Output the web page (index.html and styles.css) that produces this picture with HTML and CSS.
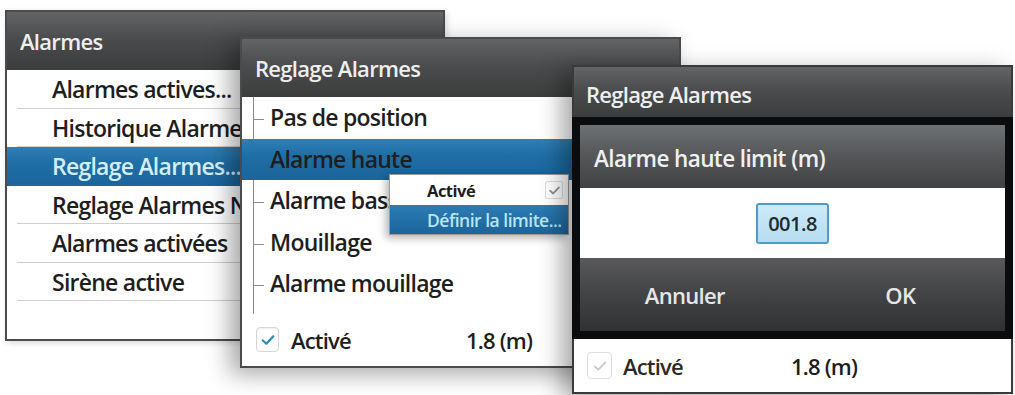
FILE: index.html
```html
<!DOCTYPE html>
<html lang="fr">
<head>
<meta charset="utf-8">
<title>Alarmes</title>
<link rel="stylesheet" href="styles.css">
</head>
<body>
<div class="desk">
  <section class="win w1">
    <header class="hdr">Alarmes</header>
    <ul class="list1">
      <li class="r1">Alarmes actives...</li>
      <li class="r1">Historique Alarmes</li>
      <li class="r1 sel">Reglage Alarmes...</li>
      <li class="r1">Reglage Alarmes N</li>
      <li class="r1">Alarmes activées</li>
      <li class="r1">Sirène active</li>
    </ul>
  </section>

  <section class="win w2">
    <header class="hdr">Reglage Alarmes</header>
    <ul class="tree">
      <li class="r2">Pas de position</li>
      <li class="r2 sel">Alarme haute</li>
      <li class="r2">Alarme basse</li>
      <li class="r2">Mouillage</li>
      <li class="r2">Alarme mouillage</li>
      <li class="tail"></li>
    </ul>
    <div class="foot">
      <span class="cb"><svg viewBox="0 0 24 24" width="16" height="16"><polyline points="4,12.5 9.5,17.5 20,6.5" fill="none" stroke="#2a87bf" stroke-width="3.2" stroke-linecap="round" stroke-linejoin="round"/></svg></span>
      <span class="flabel">Activé</span>
      <span class="fval">1.8 (m)</span>
    </div>
    <div class="ctx">
      <div class="ctx-row"><span class="ctx-bold">Activé</span><span class="ctx-cb"><svg viewBox="0 0 24 24" width="13" height="13"><polyline points="4,12.5 9.5,17.5 20,6.5" fill="none" stroke="#8a9097" stroke-width="3.4" stroke-linecap="round" stroke-linejoin="round"/></svg></span></div>
      <div class="ctx-row ctx-sel">Définir la limite...</div>
    </div>
  </section>

  <section class="win w3">
    <header class="hdr hdr3">Reglage Alarmes</header>
    <div class="dlg">
      <div class="dlg-hdr">Alarme haute limit (m)</div>
      <div class="dlg-body"><span class="inp">001.8</span></div>
      <div class="dlg-btns"><span class="btn">Annuler</span><span class="btn">OK</span></div>
    </div>
    <div class="foot foot3">
      <span class="cb cb3"><svg viewBox="0 0 24 24" width="16" height="16"><polyline points="4,12.5 9.5,17.5 20,6.5" fill="none" stroke="#c9c9c9" stroke-width="2.6" stroke-linecap="round" stroke-linejoin="round"/></svg></span>
      <span class="flabel f3">Activé</span>
      <span class="fval f3v">1.8 (m)</span>
    </div>
  </section>
</div>
</body>
</html>
```
FILE: styles.css
```css
* { box-sizing: border-box; }
html, body { margin: 0; padding: 0; background: #ffffff; }
body { font-family: "Open Sans", "Noto Sans", "DejaVu Sans", sans-serif; font-weight: 600; }

.desk { position: relative; width: 1015px; height: 395px; overflow: hidden; background: #fff; }

.win {
  position: absolute;
  background: #fff;
  border: 2px solid #4b4b4b;
  display: flex;
  flex-direction: column;
}
.w1 { left: 5px; top: 10px; width: 440px; height: 331px; z-index: 1; box-shadow: 2px 2px 6px rgba(0,0,0,0.15); }
.w2 { left: 240px; top: 37px; width: 441px; height: 331px; z-index: 2; box-shadow: -10px 6px 22px rgba(0,0,0,0.35); }
.w3 { left: 572px; top: 65px; width: 441px; height: 329px; z-index: 3; border-color: #3a3a3a; box-shadow: -10px 6px 22px rgba(0,0,0,0.35); }

.hdr {
  height: 58px;
  flex: none;
  display: flex;
  align-items: center;
  padding: 0 0 0 13px;
  font-size: 22px;
  letter-spacing: -0.7px;
  color: #eeeeee;
  background: linear-gradient(#626466 0%, #4b4c4d 45%, #3b3c3c 100%);
}
.hdr3 { height: 51px; padding-left: 12px; padding-top: 3px; }

ul { list-style: none; margin: 0; padding: 0; }

.r1 {
  height: 38.5px;
  line-height: 38px;
  margin: 0 10px;
  padding-left: 35px;
  font-size: 23px;
  letter-spacing: -0.75px;
  color: #1e1e1e;
  white-space: nowrap;
  overflow: hidden;
  border-bottom: 1px solid #cfcfcf;
}
.sel {
  background: linear-gradient(#2f7fb6 0%, #1f6ea5 40%, #1a659b 100%);
  color: #d3eefa;
}
.r1.sel { margin: 0; padding-left: 45px; border-bottom: none; }

.tree { flex: none; }
.r2 {
  height: 41.5px;
  line-height: 41px;
  padding-left: 28px;
  font-size: 23px;
  letter-spacing: -0.75px;
  color: #1e1e1e;
  white-space: nowrap;
  background:
    linear-gradient(#8c8c8c, #8c8c8c) no-repeat 11px 0 / 1px 100%,
    linear-gradient(#8c8c8c, #8c8c8c) no-repeat 11px 55% / 11px 1px;
}
.r2.sel {
  background: linear-gradient(#2f7fb6 0%, #1f6ea5 40%, #1a659b 100%);
}
.tail {
  height: 9px;
  background: linear-gradient(#8c8c8c, #8c8c8c) no-repeat 11px 0 / 1px 100%;
}

.foot {
  flex: 1;
  display: flex;
  align-items: center;
  padding-left: 14px;
  font-size: 22px;
  letter-spacing: -0.8px;
  color: #1e1e1e;
}
.cb {
  width: 23px;
  height: 25px;
  border: 1px solid #d6d6d6;
  border-radius: 4px;
  background: #fff;
  display: flex;
  align-items: center;
  justify-content: center;
  box-shadow: inset 0 1px 2px rgba(0,0,0,0.08);
}
.flabel { margin-left: 12px; }
.fval { margin-left: 115px; }

.ctx {
  position: absolute;
  left: 147px;
  top: 135px;
  width: 180px;
  height: 61px;
  background: #fff;
  border: 1px solid #9a9a9a;
  box-shadow: -3px 3px 8px rgba(0,0,0,0.3);
  display: flex;
  flex-direction: column;
}
.ctx-row {
  height: 30px;
  display: flex;
  align-items: center;
  padding-left: 37px;
  font-size: 17.5px;
  letter-spacing: -0.5px;
  color: #1e1e1e;
  white-space: nowrap;
}
.ctx-bold { font-weight: 700; font-size: 16.5px; }
.ctx-cb {
  margin-left: auto;
  margin-right: 5px;
  width: 18px;
  height: 18px;
  border: 1px solid #dcdcdc;
  border-radius: 2px;
  display: flex;
  align-items: center;
  justify-content: center;
}
.ctx-sel {
  height: 29px;
  background: linear-gradient(#2c7cb3, #1a659b);
  color: #b9e4f7;
}

.dlg {
  flex: none;
  height: 222px;
  margin: -1px -2px 0 -2px;
  border: 8px solid #0b0c0d;
  display: flex;
  flex-direction: column;
  background: #fff;
}
.dlg-hdr {
  height: 63px;
  display: flex;
  align-items: center;
  padding: 3px 0 0 14px;
  font-size: 22.5px;
  letter-spacing: -0.6px;
  color: #f0f0f0;
  background: linear-gradient(#6e7174 0%, #56585a 45%, #404244 100%);
}
.dlg-body {
  height: 70px;
  display: flex;
  align-items: center;
  justify-content: center;
}
.inp {
  width: 73px;
  height: 41px;
  display: flex;
  align-items: center;
  justify-content: center;
  font-size: 20px;
  letter-spacing: -0.5px;
  color: #1e2a30;
  background: linear-gradient(#cdeaf8, #b5dcf0);
  border: 2px solid #4f9ccc;
  border-radius: 3px;
}
.dlg-btns {
  flex: 1;
  display: flex;
  background: linear-gradient(#59595b 0%, #444546 45%, #303132 100%);
}
.btn {
  flex: 1;
  display: flex;
  align-items: center;
  justify-content: center;
  font-size: 22px;
  letter-spacing: -0.7px;
  color: #e6e6e6;
}
.btn:first-child { padding-right: 6px; }

.foot3 { padding-left: 13px; }
.cb3 { width: 25px; height: 27px; border-color: #dedede; box-shadow: none; }
.f3 { margin-left: 11px; color: #2a2a2a; }
.f3v { margin-left: 108px; }
```
